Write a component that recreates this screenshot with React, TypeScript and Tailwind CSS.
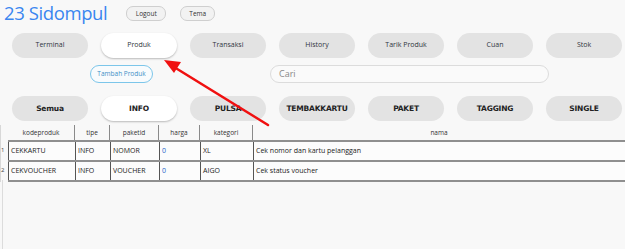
const NAV = ['Terminal', 'Produk', 'Transaksi', 'History', 'Tarik Produk', 'Cuan', 'Stok'];
const FILTERS = ['Semua', 'INFO', 'PULSA', 'TEMBAKKARTU', 'PAKET', 'TAGGING', 'SINGLE'];

const COLS = [
  { key: 'kodeproduk', w: 'w-[67px]' },
  { key: 'tipe', w: 'w-[35px]' },
  { key: 'paketid', w: 'w-[49px]' },
  { key: 'harga', w: 'w-[41px]' },
  { key: 'kategori', w: 'w-[53px]' },
  { key: 'nama', w: 'flex-1' },
];

const ROWS = [
  ['CEKKARTU', 'INFO', 'NOMOR', '0', 'XL', 'Cek nomor dan kartu pelanggan'],
  ['CEKVOUCHER', 'INFO', 'VOUCHER', '0', 'AIGO', 'Cek status voucher'],
];

function Pill({ label, active, bold }: { label: string; active: boolean; bold?: boolean }) {
  return (
    <div
      className={
        'flex h-[25px] w-[76px] items-center justify-center rounded-full ' +
        (active ? 'bg-white shadow-[0_1px_2px_rgba(0,0,0,0.25)]' : 'bg-[#e3e3e3]') +
        (bold
          ? " font-['DejaVu_Sans',sans-serif] text-[7.5px] font-bold tracking-[-0.2px] text-[#222]"
          : ' text-[7px] text-[#2f3440]')
      }
    >
      {label}
    </div>
  );
}

export default function App() {
  return (
    <div className="relative h-[249px] w-[625px] overflow-hidden bg-[#f8f8f8] font-['Open_Sans',sans-serif]">
      {/* top bar */}
      <div className="flex h-[27px] items-center pl-[4px]">
        <span className="font-['Open_Sans',sans-serif] text-[18.5px] leading-none font-medium tracking-[-0.4px] text-[#3a86f0]">
          23 Sidompul
        </span>
        <div className="ml-[19px] flex h-[15px] w-[40px] items-center justify-center rounded-[7px] border border-[#cfcfcf] bg-[#f2f2f2] text-[6.5px] text-[#333]">
          Logout
        </div>
        <div className="ml-[14px] flex h-[15px] w-[35px] items-center justify-center rounded-[7px] border border-[#cfcfcf] bg-[#f2f2f2] text-[6.5px] text-[#333]">
          Tema
        </div>
      </div>

      {/* nav */}
      <div className="mt-[6px] flex gap-[13px] pl-[12px]">
        {NAV.map((n) => (
          <Pill key={n} label={n} active={n === 'Produk'} />
        ))}
      </div>

      {/* actions */}
      <div className="mt-[7px] flex h-[18px] items-center">
        <div className="ml-[90px] flex h-[18px] w-[63px] items-center justify-center rounded-full border border-[#7cc6ea] bg-[#f8fbfd] text-[6.5px] text-[#3d8fc6]">
          Tambah Produk
        </div>
        <div className="ml-[117px] flex h-[18px] w-[279px] items-center rounded-full border border-[#dcdcdc] bg-[#fafafa] pl-[8px] text-[9px] text-[#888]">
          Cari
        </div>
      </div>

      {/* filters */}
      <div className="mt-[13px] flex gap-[13px] pl-[12px]">
        {FILTERS.map((f) => (
          <Pill key={f} label={f} active={f === 'INFO'} bold />
        ))}
      </div>

      {/* table */}
      <div className="mt-[4px] flex text-[7px] text-[#222]">
        <div className="w-[8px] border-l border-[#d8d8d8]">
          <div className="h-[15px]" />
          {ROWS.map((_, i) => (
            <div key={i} className="flex h-[20px] items-center text-[6px] text-[#444]">
              {i + 1}
            </div>
          ))}
        </div>
        <div className="flex-1">
          <div className="flex h-[15px]">
            {COLS.map((c) => (
              <div
                key={c.key}
                className={c.w + ' flex items-center justify-center border-r border-[#8a8a8a] text-[6.5px] text-[#333] last:border-r-0'}
              >
                {c.key}
              </div>
            ))}
          </div>
          <div className="border-t-2 border-[#8f8f8f]">
            {ROWS.map((r, i) => (
              <div key={i} className="flex h-[20px] border-b-2 border-[#8f8f8f] bg-[#fcfcfc]">
                {r.map((cell, j) => (
                  <div
                    key={j}
                    className={
                      COLS[j].w +
                      ' flex items-center border-l border-[#555] pl-[2px] ' +
                      (j === 3 ? 'text-[#2563c9]' : 'text-[#222]')
                    }
                  >
                    {cell}
                  </div>
                ))}
              </div>
            ))}
          </div>
        </div>
      </div>
      <div className="absolute left-[2px] top-[180px] h-[69px] w-px bg-[#dcdcdc]" />

      {/* annotation arrow */}
      <svg className="absolute left-0 top-0" width="625" height="249" viewBox="0 0 625 249">
        <line x1="268" y1="125" x2="174" y2="67" stroke="#f01010" strokeWidth="2.6" strokeLinecap="round" />
        <polygon points="164,60 181,62 174,73" fill="#f01010" />
      </svg>
    </div>
  );
}
